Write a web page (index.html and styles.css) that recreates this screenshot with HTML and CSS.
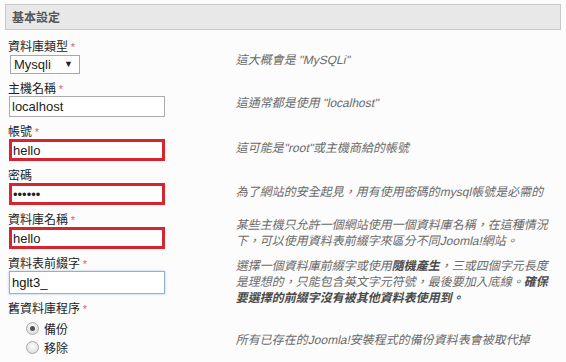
FILE: index.html
```html
<!DOCTYPE html>
<html lang="zh-Hant">
<head>
<meta charset="utf-8">
<title>基本設定</title>
<link rel="stylesheet" href="styles.css">
</head>
<body>
<div class="page">
  <div class="legend">基本設定</div>
  <div class="form">
    <div class="row">
      <div class="field">
        <label class="label">資料庫類型 <span class="req">*</span></label>
        <span class="select-wrap"><select class="select"><option>Mysqli</option></select></span>
      </div>
      <p class="desc"><span class="ln">這大概會是 <span class="lat">"MySQLi"</span></span></p>
    </div>
    <div class="row">
      <div class="field">
        <label class="label">主機名稱 <span class="req">*</span></label>
        <input class="input" type="text" value="localhost">
      </div>
      <p class="desc"><span class="ln">這通常都是使用 <span class="lat">"localhost"</span></span></p>
    </div>
    <div class="row">
      <div class="field">
        <label class="label">帳號 <span class="req">*</span></label>
        <input class="input input-error" type="text" value="hello">
      </div>
      <p class="desc desc-3"><span class="ln">這可能是<span class="lat">"root"</span>或主機商給的帳號</span></p>
    </div>
    <div class="row">
      <div class="field">
        <label class="label">密碼</label>
        <input class="input input-error" type="password" value="123456">
      </div>
      <p class="desc desc-3"><span class="ln">為了網站的安全起見，用有使用密碼的<span class="lat">mysql</span>帳號是必需的</span></p>
    </div>
    <div class="row">
      <div class="field">
        <label class="label">資料庫名稱 <span class="req">*</span></label>
        <input class="input input-error" type="text" value="hello">
      </div>
      <p class="desc desc-5"><span class="ln">某些主機只允許一個網站使用一個資料庫名稱，在這種情況</span><span class="ln">下，可以使用資料表前綴字來區分不同<span class="lat">Joomla!</span>網站。</span></p>
    </div>
    <div class="row">
      <div class="field">
        <label class="label">資料表前綴字 <span class="req">*</span></label>
        <input class="input input-focus" type="text" value="hglt3_">
      </div>
      <p class="desc desc-6"><span class="ln">選擇一個資料庫前綴字或使用<b>隨機產生</b>，三或四個字元長度</span><span class="ln">是理想的，只能包含英文字元符號，最後要加入底線。<b>確保</b></span><span class="ln"><b>要選擇的前綴字沒有被其他資料表使用到。</b></span></p>
    </div>
    <div class="row">
      <div class="field">
        <label class="label">舊資料庫程序 <span class="req">*</span></label>
        <div class="radios">
          <label class="radio"><span class="dot dot-on"></span>備份</label>
          <label class="radio"><span class="dot"></span>移除</label>
        </div>
      </div>
      <p class="desc desc-7"><span class="ln">所有已存在的<span class="lat">Joomla!</span>安裝程式的備份資料表會被取代掉</span></p>
    </div>
  </div>
</div>
</body>
</html>
```
FILE: styles.css
```css
html, body {
  margin: 0;
  padding: 0;
  background: #fcfcfc;
}
body {
  font-family: "Liberation Sans", "Noto Sans CJK TC", sans-serif;
  color: #222;
}
.page {
  padding: 4px 5px 0 8px;
}
.legend {
  margin-left: -3px;
  height: 24px;
  line-height: 24px;
  border: 1px solid #c8c8c8;
  background: #e8e8e8;
  padding-left: 6px;
  font-family: "Noto Sans CJK TC", sans-serif;
  font-weight: bold;
  font-size: 12px;
  color: #555;
  width: 548px;
}
.form {
  margin-top: 7px;
}
.row {
  display: flex;
  align-items: center;
}
.field {
  width: 228px;
  flex: none;
  padding-bottom: 5px;
}
.label {
  display: block;
  height: 17px;
  line-height: 17px;
  font-family: "Noto Sans CJK TC", sans-serif;
  font-size: 12px;
  color: #222;
}
.req {
  color: #e0606e;
  font-family: "Liberation Sans", sans-serif;
  font-size: 11px;
}
.select-wrap {
  position: relative;
  display: block;
  width: 70px;
  margin: 1px 0 0 2px;
}
.select {
  appearance: none;
  -webkit-appearance: none;
  width: 70px;
  height: 19px;
  border: 1px solid #a9a9a9;
  background: #fff;
  font-family: "Liberation Sans", sans-serif;
  font-size: 13px;
  color: #222;
  padding: 0 0 0 3px;
  margin: 0;
  border-radius: 0;
  display: block;
}
.select-wrap::after {
  content: "▼";
  position: absolute;
  right: 7px;
  top: 4px;
  font-size: 9px;
  color: #222;
  pointer-events: none;
}
.input {
  display: block;
  box-sizing: border-box;
  margin: 0 0 0 1px;
  width: 156px;
  height: 21px;
  border: 1px solid #ababab;
  background: #fff;
  padding: 0 2px;
  font-family: "Liberation Sans", sans-serif;
  font-size: 13px;
  color: #222;
  outline: none;
  border-radius: 0;
}
.input-error {
  height: 22px;
  border: 3px solid #d8242f;
  padding: 0 1px;
}
.input-focus {
  height: 23px;
  border: 1px solid #8fb0de;
  box-shadow: 0 0 2px rgba(110, 150, 215, 0.6);
  padding: 0 2px;
  color: #111;
}
.radios {
  margin-top: 3px;
  padding-left: 18px;
}
.radio {
  display: flex;
  align-items: center;
  height: 19px;
  font-family: "Noto Sans CJK TC", sans-serif;
  font-size: 12px;
  color: #222;
}
.dot {
  box-sizing: border-box;
  width: 13px;
  height: 13px;
  border-radius: 50%;
  border: 1px solid #a8a8a8;
  background: radial-gradient(circle at 50% 40%, #fdfdfd 0%, #e6e6e6 60%, #d2d2d2 100%);
  margin-right: 5px;
  position: relative;
}
.dot-on::after {
  content: "";
  position: absolute;
  left: 3px;
  top: 3px;
  width: 5px;
  height: 5px;
  border-radius: 50%;
  background: #505050;
}
.desc {
  margin: 0;
  width: 320px;
  padding-top: 2px;
  font-family: "Noto Sans CJK TC", sans-serif;
  font-style: normal;
  font-size: 12px;
  line-height: 16px;
  color: #6a6a6a;
}
.ln {
  display: block;
  height: 16px;
  white-space: nowrap;
  transform: skewX(-13deg);
  transform-origin: 0 75%;
}
.desc b {
  color: #4a4a4a;
}
.desc .lat {
  font-family: "Liberation Sans", sans-serif;
  font-style: normal;
}
.desc-3 {
  padding-top: 6px;
}
.desc-5 {
  padding-top: 0;
}
.desc-6 {
  padding-top: 0;
  margin: 0 0 -8px;
}
.desc-7 {
  padding-top: 16px;
}
```
